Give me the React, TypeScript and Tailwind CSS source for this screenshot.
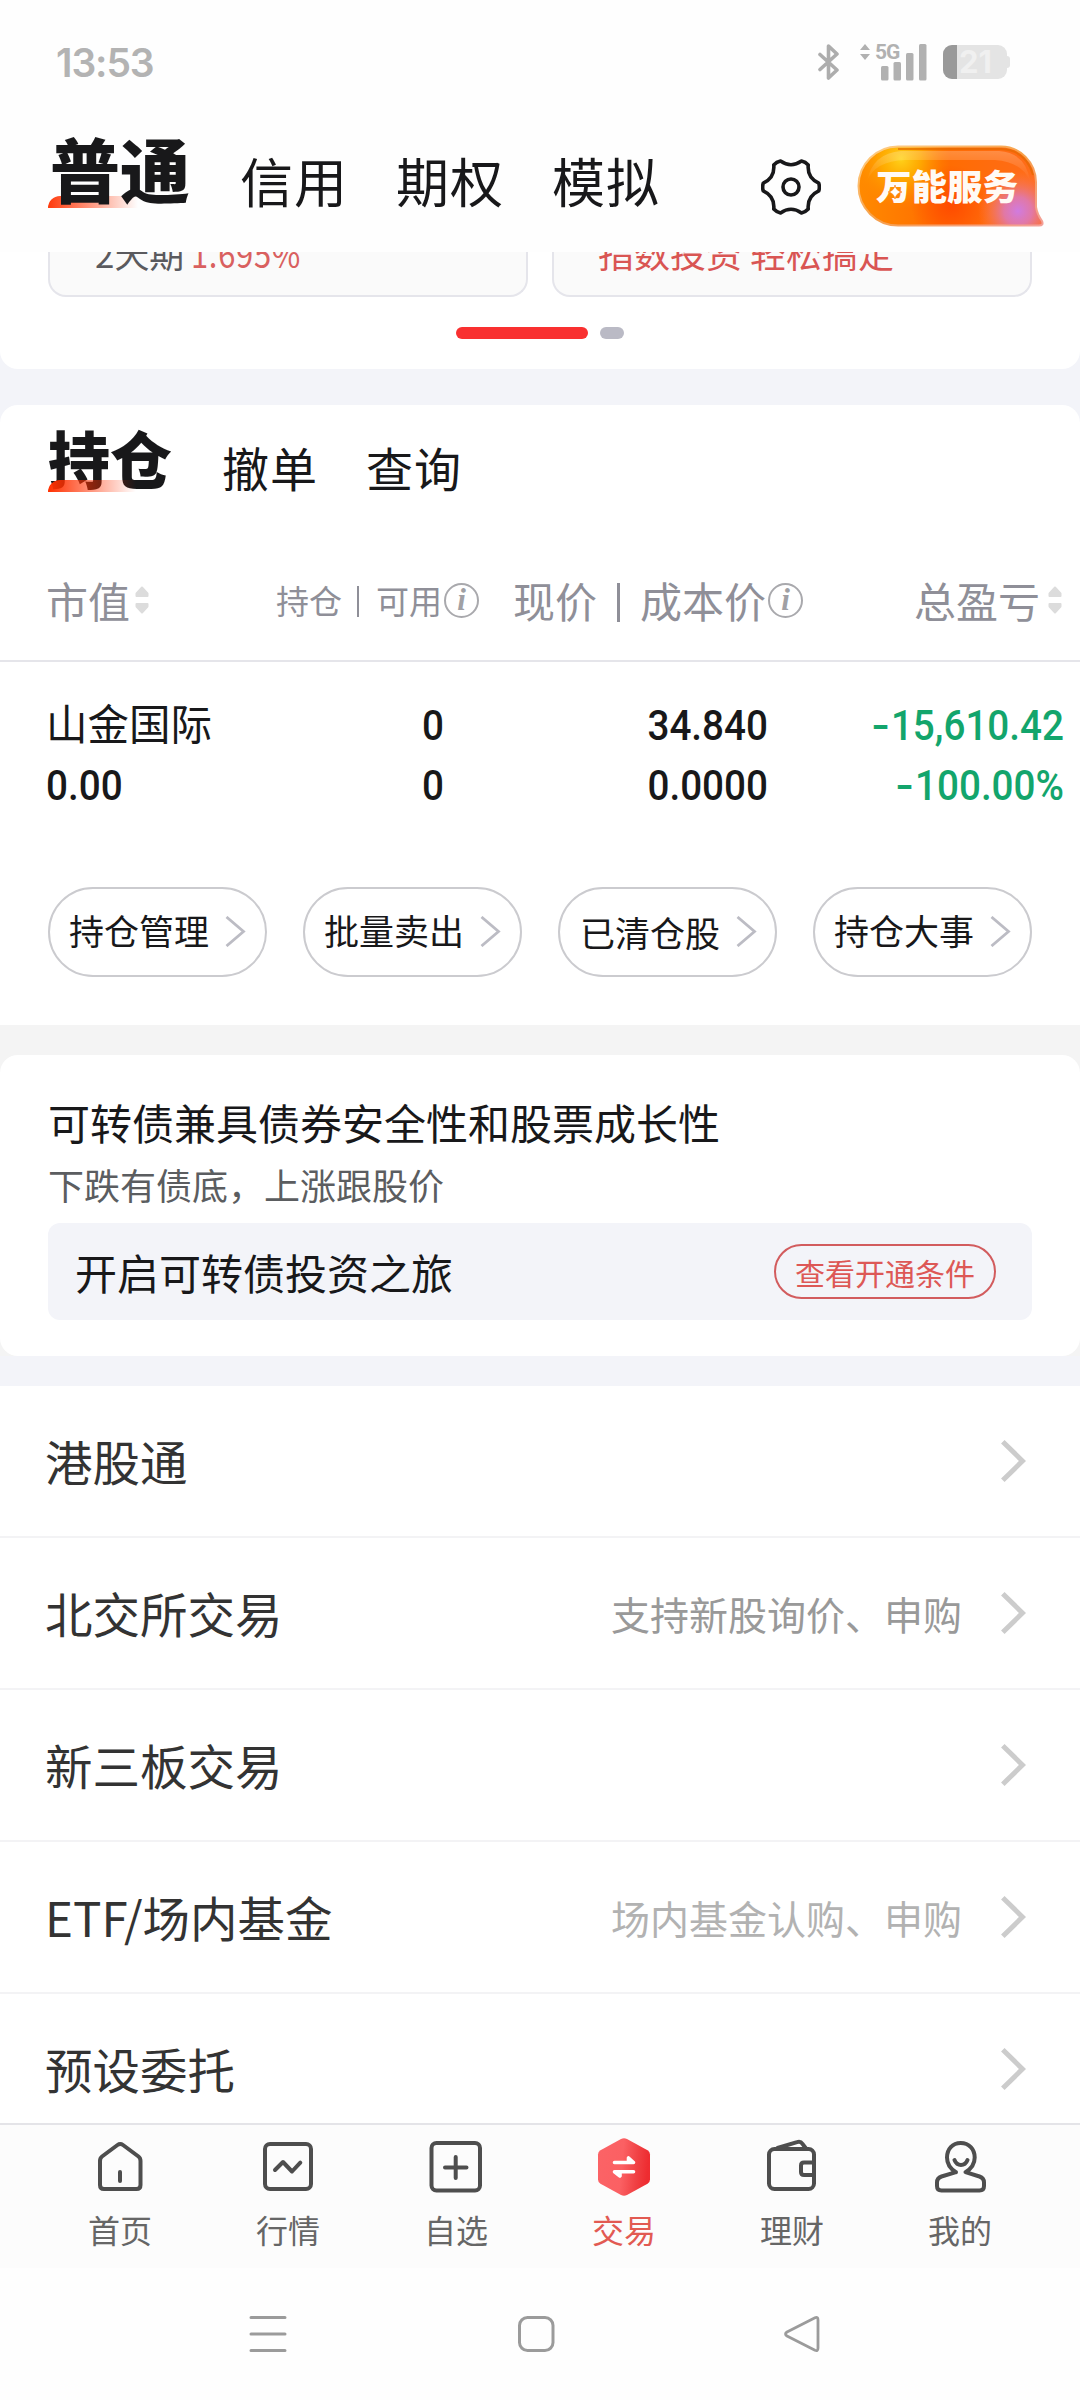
import React from "react";

const CJK = "font-['Noto_Sans_CJK_SC',sans-serif]";

function StatusBar() {
  return (
    <div className="flex h-[124px] items-center pl-[56px] pr-[70px]">
      <span className="font-['Inter',sans-serif] text-[39px] font-semibold leading-none tracking-[-1.1px] text-[#b3b3b3]">
        13:53
      </span>
      <div className="ml-auto flex h-[40px] items-center">
        <svg width="22" height="38" viewBox="0 0 22 38" fill="none" stroke="#adadad" strokeWidth="3.6" strokeLinejoin="round" strokeLinecap="round">
          <path d="M2 11.5 L19 27 L10.5 35 V3 L19 11 L2 26.5" />
        </svg>
        <div className="ml-[20px] flex h-[38px] items-start">
          <svg width="10" height="16" viewBox="0 0 10 16" className="mt-[1px]" fill="#b1b1b1">
            <path d="M5 0 L10 6 H0Z M5 16 L10 10 H0Z" />
          </svg>
          <div className="relative ml-[11px] h-[38px] w-[48px]">
            <svg width="48" height="38" viewBox="0 0 48 38" fill="#b1b1b1">
              <rect x="0" y="23" width="7.5" height="14.5" rx="1.5" />
              <rect x="12.5" y="19" width="7.5" height="18.5" rx="1.5" />
              <rect x="25" y="10" width="7.5" height="27.5" rx="1.5" />
              <rect x="38" y="1" width="7.5" height="36.5" rx="1.5" />
            </svg>
            <span className="absolute left-[-6px] top-[-1px] font-['Roboto',sans-serif] text-[21px] font-bold leading-[20px] tracking-[-1px] text-[#b1b1b1]">
              5G
            </span>
          </div>
        </div>
        <div className="ml-[14px] flex items-center">
          <div className="flex h-[34px] w-[64px] rounded-[9px] bg-[#e4e4e4]">
            <div className="h-full w-[14px] rounded-l-[9px] bg-[#999999]" />
            <span className="pl-[2px] font-['Inter',sans-serif] text-[31px] font-bold leading-[34px] text-[#f0f0f0]">21</span>
          </div>
          <div className="h-[12px] w-[3px] rounded-r-full bg-[#e4e4e4]" />
        </div>
      </div>
    </div>
  );
}

/** Six-lobed gear outline centred on (30, 30). */
function gearPath() {
  const pt = (deg: number, r: number) => {
    const a = (deg * Math.PI) / 180;
    return `${(30 + r * Math.cos(a)).toFixed(2)} ${(30 + r * Math.sin(a)).toFixed(2)}`;
  };
  let d = `M${pt(-8, 28)}`;
  for (let k = 0; k < 6; k++) {
    const c = k * 60;
    d += ` Q${pt(c, 29)} ${pt(c + 8, 28)} C${pt(c + 20, 21.5)} ${pt(c + 40, 21.5)} ${pt(c + 52, 28)}`;
  }
  return d + "Z";
}

function ServiceBadge() {
  const shape =
    "M43 3.5 H146 A35 36 0 0 1 181 39 V64 Q182 71 187 78 Q189 82.5 184 82.5 H43 A39.5 39.5 0 0 1 43 3.5Z";
  return (
    <div className="relative ml-[34px] mt-[19px] h-[86px] w-[190px]">
      <svg width="190" height="86" viewBox="0 0 190 86" className="absolute inset-0">
        <defs>
          <linearGradient id="base" x1="0" y1="0" x2="1" y2="0">
            <stop offset="0" stopColor="#ff8a00" />
            <stop offset="0.45" stopColor="#ff6c00" />
            <stop offset="1" stopColor="#ff6c1c" />
          </linearGradient>
          <radialGradient id="sun" gradientUnits="userSpaceOnUse" cx="46" cy="16" r="50">
            <stop offset="0" stopColor="#ffd21a" />
            <stop offset="0.4" stopColor="#ffb400" stopOpacity="0.8" />
            <stop offset="1" stopColor="#ff8a00" stopOpacity="0" />
          </radialGradient>
          <radialGradient id="violet" gradientUnits="userSpaceOnUse" cx="163" cy="68" r="40">
            <stop offset="0" stopColor="#d07be0" />
            <stop offset="0.35" stopColor="#dc7abf" stopOpacity="0.85" />
            <stop offset="1" stopColor="#ff7a50" stopOpacity="0" />
          </radialGradient>
          <radialGradient id="ember" gradientUnits="userSpaceOnUse" cx="96" cy="62" r="40">
            <stop offset="0" stopColor="#ff4b00" />
            <stop offset="1" stopColor="#ff4b00" stopOpacity="0" />
          </radialGradient>
          <linearGradient id="gloss" x1="0" y1="0" x2="0" y2="1">
            <stop offset="0" stopColor="#ffffff" stopOpacity="0.22" />
            <stop offset="1" stopColor="#ffffff" stopOpacity="0" />
          </linearGradient>
          <linearGradient id="rim" x1="0" y1="0" x2="1" y2="1">
            <stop offset="0" stopColor="#ffd28a" />
            <stop offset="0.5" stopColor="#f6a04a" />
            <stop offset="1" stopColor="#f3a09a" />
          </linearGradient>
        </defs>
        <path d={shape} fill="url(#base)" />
        <path d={shape} fill="url(#ember)" />
        <path d={shape} fill="url(#sun)" />
        <path d={shape} fill="url(#violet)" />
        <path d="M46 8 H144 Q171 10 175 38 Q167 19 140 17 H50 Q20 18 12 38 Q18 10 46 8Z" fill="url(#gloss)" />
        <path d="M43 6 H146 Q171 7 178 32" fill="none" stroke="#e26a00" strokeOpacity="0.7" strokeWidth="2" />
        <path d={shape} fill="none" stroke="url(#rim)" strokeWidth="2" />
      </svg>
      <div className="absolute left-[21px] top-[24px] whitespace-nowrap text-[35.5px] font-black leading-[36px] text-[#fffaf5]">
        万能服务
      </div>
      <svg width="14" height="14" viewBox="0 0 14 14" className="absolute left-[33px] top-[42px]">
        <path d="M7 0 Q8 6 14 7 Q8 8 7 14 Q6 8 0 7 Q6 6 7 0Z" fill="#fff" stroke="#ff8a2a" strokeWidth="0.8" />
      </svg>
    </div>
  );
}

function Header() {
  return (
    <div className="flex h-[128px] items-start pl-[50px] pr-[35px] text-[#18181a]">
      <div className="relative mt-[9px] text-[70px] font-black leading-[70px]">
        <div className="absolute left-[-2px] top-[63px] h-[12px] w-[90px] rounded-tl-[12px] bg-gradient-to-r from-[#ff3a0c] to-[#ff3a0c]/0" />
        <span className="relative">普通</span>
      </div>
      <div className="ml-[50px] mt-[29px] flex gap-[48px] text-[53px] leading-[54px] tracking-[1px]">
        <span>信用</span>
        <span>期权</span>
        <span>模拟</span>
      </div>
      <svg width="60" height="60" viewBox="0 0 60 60" className="ml-auto mt-[33px]" fill="none" stroke="#18181a" strokeWidth="3.6" strokeLinejoin="round">
        <path d={gearPath()} />
        <circle cx="30" cy="30" r="8" />
      </svg>
      <ServiceBadge />
    </div>
  );
}

function Promo() {
  return (
    <div className="h-[117px] overflow-hidden rounded-b-[18px] bg-white px-[48px]">
      <div className="flex gap-[24px]">
        <div className="h-[45px] flex-1 overflow-hidden rounded-b-[18px] border-2 border-t-0 border-[#e5e5eb] bg-[#fafafa]">
          <div className="mt-[-18px] flex whitespace-nowrap pl-[45px] text-[36px] leading-[36px]">
            <span className="origin-left scale-x-[0.97] text-[#5a5a5e]">2天期</span>
            <span className="ml-[4px] origin-left scale-x-[0.86] tracking-[0.8px] text-[#d9605f]">1.695%</span>
          </div>
        </div>
        <div className="h-[45px] flex-1 overflow-hidden rounded-b-[18px] border-2 border-t-0 border-[#e5e5eb] bg-[#fafafa]">
          <div className="mt-[-18px] whitespace-nowrap pl-[44px] text-[36px] leading-[36px] text-[#d95553]">
            指数投资 轻松搞定
          </div>
        </div>
      </div>
      <div className="mt-[30px] flex justify-center gap-[12px]">
        <div className="h-[12px] w-[132px] rounded-full bg-[#f93030]" />
        <div className="h-[12px] w-[24px] rounded-full bg-[#babac5]" />
      </div>
    </div>
  );
}

function SortIcon() {
  return (
    <svg width="14" height="28" viewBox="0 0 14 28" fill="#dcdcdc" stroke="#dcdcdc" strokeWidth="2" strokeLinejoin="round">
      <path d="M7 1.5 L12.5 7.5 V10 H1.5 V7.5Z" />
      <path d="M7 26.5 L12.5 20.5 V18 H1.5 V20.5Z" />
    </svg>
  );
}

function InfoIcon() {
  return (
    <span className="ml-[2px] flex h-[35px] w-[35px] items-center justify-center rounded-full border-2 border-[#a9a9ad] font-['Liberation_Serif',serif] text-[31px] font-bold italic leading-[30px] text-[#a0a0a4]">
      i
    </span>
  );
}

function Num({ children, className = "" }: { children: React.ReactNode; className?: string }) {
  return (
    <span className={`inline-block whitespace-nowrap pt-px font-['Roboto',sans-serif] text-[42px] font-medium leading-[60px] ${className}`}>
      {children}
    </span>
  );
}

function Minus() {
  return <span className="inline-block origin-left scale-x-[1.35] pr-[7px]">-</span>;
}

function Chevron({ size }: { size: "sm" | "lg" }) {
  return size === "sm" ? (
    <svg width="21" height="31" viewBox="0 0 21 31" fill="none" stroke="#bcbcc4" strokeWidth="2.8">
      <path d="M1.5 1 L18.5 15.5 L1.5 30" />
    </svg>
  ) : (
    <svg width="25" height="44" viewBox="0 0 25 44" fill="none" stroke="#cccccc" strokeWidth="5">
      <path d="M1.8 2.8 L21.5 22 L1.8 41.2" />
    </svg>
  );
}

const actions = ["持仓管理", "批量卖出", "已清仓股", "持仓大事"];

function Holdings() {
  return (
    <div className="h-[620px] rounded-t-[18px] bg-white text-[#18181a]">
      <div className="flex h-[135px] items-start pl-[48px]">
        <div className="relative mt-[21px] text-[62px] font-black leading-[62px]">
          持仓
          <div className="absolute left-0 top-[54px] h-[12px] w-[88px] rounded-tl-[12px] bg-gradient-to-r from-[#ff3000] to-[#ff3000]/0" />
        </div>
        <div className="ml-[50px] mt-[38px] flex gap-[48px] text-[47px] leading-[48px] tracking-[1px]">
          <span>撤单</span>
          <span>查询</span>
        </div>
      </div>

      <div className="flex h-[122px] items-center border-b-2 border-[#e5e5ea] pl-[46px] text-[42px] leading-[42px] text-[#8f8f98]">
        <div className="flex w-[204px] items-center gap-[5px]">
          <span>市值</span>
          <SortIcon />
        </div>
        <div className="flex w-[229px] items-center justify-end text-[33px]">
          <span>持仓</span>
          <span className="ml-[15px] mr-[17px] mt-[3px] h-[31px] w-[2px] bg-[#8f8f98]" />
          <span>可用</span>
          <InfoIcon />
        </div>
        <div className="flex w-[324px] items-center justify-end">
          <span>现价</span>
          <span className="ml-[20px] mr-[20px] mt-[5px] h-[39px] w-[3px] bg-[#8f8f98]" />
          <span>成本价</span>
          <InfoIcon />
        </div>
        <div className="flex w-[259px] items-center justify-end gap-[8px]">
          <span>总盈亏</span>
          <SortIcon />
        </div>
      </div>

      <div className="grid h-[153px] grid-cols-[244px_154px_324px_296px] grid-rows-[60px_60px] pl-[46px] pt-[33px]">
        <span className="text-[41.5px] leading-[55px]">山金国际</span>
        <Num className="origin-right scale-x-[0.92] text-right">0</Num>
        <Num className="origin-right scale-x-[0.92] text-right">34.840</Num>
        <Num className="origin-right scale-x-[0.92] text-right text-[#13a56c]">
          <Minus />
          15,610.42
        </Num>
        <Num className="origin-left scale-x-[0.92]">0.00</Num>
        <Num className="origin-right scale-x-[0.92] text-right">0</Num>
        <Num className="origin-right scale-x-[0.92] text-right">0.0000</Num>
        <Num className="origin-right scale-x-[0.92] text-right text-[#13a56c]">
          <Minus />
          100.00%
        </Num>
      </div>

      <div className="mt-[72px] flex justify-between px-[48px]">
        {actions.map((label, i) => (
          <div key={label} className="flex h-[90px] w-[219px] items-center rounded-full border-2 border-[#cbcbcf] pb-[5px] pl-[19px]">
            <span className={`whitespace-nowrap text-[35px] leading-[35px] ${i === 2 ? "pl-[1px] pt-[4px]" : ""}`}>{label}</span>
            <div className="ml-[16px] mt-[3px]">
              <Chevron size="sm" />
            </div>
          </div>
        ))}
      </div>
    </div>
  );
}

function BondCard() {
  return (
    <div className="bg-[#f4f4f4] pt-[30px]">
      <div className="h-[301px] rounded-[18px] bg-white px-[48px] pt-[46px]">
        <div className="text-[42px] leading-[42px] text-[#18181a]">可转债兼具债券安全性和股票成长性</div>
        <div className="mt-[23px] text-[36px] leading-[36px] text-[#5b5d60]">下跌有债底，上涨跟股价</div>
        <div className="mt-[21px] flex h-[97px] items-center justify-between rounded-[12px] bg-[#f3f4f9] pl-[27px] pr-[36px]">
          <span className="text-[42px] leading-[42px] text-[#18181a]">开启可转债投资之旅</span>
          <span className="flex h-[55px] w-[222px] items-center justify-center rounded-full border-2 border-[#d25c5e] text-[30px] leading-[30px] text-[#dd5856]">
            查看开通条件
          </span>
        </div>
      </div>
    </div>
  );
}

const menu = [
  { label: "港股通" },
  { label: "北交所交易", hint: "支持新股询价、申购", tone: "text-[#999999]" },
  { label: "新三板交易" },
  { label: "ETF/场内基金", hint: "场内基金认购、申购", tone: "text-[#b2b2b2]" },
  { label: "预设委托" },
];

function MenuList() {
  return (
    <div className="mt-[30px] h-[737px] overflow-hidden bg-white">
      {menu.map((m) => (
        <div key={m.label} className="flex h-[152px] items-center border-b-2 border-[#f3f3f5] pl-[45px] pr-[54px]">
          <span className="text-[47.5px] leading-[48px] text-[#333333]">{m.label}</span>
          {m.hint && <span className={`ml-auto mr-[39px] text-[39px] leading-[39px] ${m.tone}`}>{m.hint}</span>}
          <div className={m.hint ? "" : "ml-auto"}>
            <Chevron size="lg" />
          </div>
        </div>
      ))}
    </div>
  );
}

const tabs = [
  {
    label: "首页",
    icon: (
      <>
        <path d="M29.5 10 L14 21.5 Q12 23 12 26 V50 Q12 54 16 54 H48.5 Q52.5 54 52.5 50 V26 Q52.5 23 50.5 21.5 L35 10 Q32.2 8 29.5 10Z" />
        <path d="M32 37 V46" />
      </>
    ),
  },
  {
    label: "行情",
    icon: (
      <>
        <rect x="9" y="9" width="46" height="45" rx="5" />
        <path d="M19 35 L27 27 L36 36.5 L44.3 27.7" />
      </>
    ),
  },
  {
    label: "自选",
    icon: (
      <>
        <rect x="7.5" y="8" width="48.5" height="47.5" rx="5" />
        <path d="M31.7 22 V43 M21 32.5 H42.5" />
      </>
    ),
  },
  {
    label: "交易",
    active: true,
    icon: (
      <>
        <defs>
          <linearGradient id="hex" x1="0" y1="0" x2="1" y2="0.1">
            <stop offset="0" stopColor="#fb6366" />
            <stop offset="0.5" stopColor="#fb6063" />
            <stop offset="0.8" stopColor="#f04043" />
            <stop offset="1" stopColor="#ee2c30" />
          </linearGradient>
        </defs>
        <path
          d="M29 4 Q32 2.4 35 4 L55.5 15.3 Q58 16.8 58 19.5 V44.5 Q58 47.2 55.5 48.7 L35 60 Q32 61.6 29 60 L8.5 48.7 Q6 47.2 6 44.5 V19.5 Q6 16.8 8.5 15.3Z"
          fill="url(#hex)"
          stroke="none"
        />
        <path d="M22.5 27.5 H41.5 L36.5 23 V27 M41.5 36.8 H22.5 L28 41 V37" stroke="#fff" strokeWidth="3.6" />
      </>
    ),
  },
  {
    label: "理财",
    icon: (
      <>
        <rect x="9" y="14" width="45" height="40" rx="5.5" />
        <path d="M17.5 13 L37 7.2 Q40.5 6 42.5 8.8 L46 13.5" />
        <path d="M54 27.5 H44 Q41 27.5 41 30.5 V37 Q41 40 44 40 H54" />
      </>
    ),
  },
  {
    label: "我的",
    icon: (
      <>
        <path d="M28 37.2 L13.5 41.5 Q9 43 9 47.5 V51 Q9 55.5 13.5 55.5 H51.5 Q56 55.5 56 51 V47.5 Q56 43 51.5 41.5 L37.5 37.2 C44.5 33 46.7 28 46.7 22.5 C46.7 14 41 8 32.7 8 C24.5 8 19 14 19 22.5 C19 28 21 33 28 37.2" />
        <path d="M26.5 25 Q28.5 30 33 30 Q37.5 30 39.5 25" />
      </>
    ),
  },
];

function TabBar() {
  return (
    <div className="flex h-[145px] border-t-2 border-[#e4e4e8] bg-[#fcfcfc] px-[36px]">
      {tabs.map((t) => (
        <div key={t.label} className={`flex flex-1 flex-col items-center pt-[10px] ${t.active ? "text-[#e25a52]" : "text-[#666666]"}`}>
          <svg width="64" height="64" viewBox="0 0 64 64" fill="none" stroke="#4e4e4e" strokeWidth="4" strokeLinecap="round" strokeLinejoin="round">
            {t.icon}
          </svg>
          <span className="mt-[14px] text-[32px] leading-[32px]">{t.label}</span>
        </div>
      ))}
    </div>
  );
}

function SystemNav() {
  return (
    <div className="ml-[134px] grid h-[132px] w-[804px] grid-cols-3 items-center justify-items-center">
      <svg width="40" height="40" viewBox="0 0 40 40" stroke="#9b9b9b" strokeWidth="3" strokeLinecap="round">
        <path d="M3 3.5 H37 M3 20 H37 M3 36.5 H37" />
      </svg>
      <svg width="40" height="40" viewBox="0 0 40 40" fill="none" stroke="#9b9b9b" strokeWidth="3">
        <rect x="3.5" y="3.5" width="33.5" height="33" rx="8" />
      </svg>
      <svg width="40" height="40" viewBox="0 0 40 40" fill="none" stroke="#9b9b9b" strokeWidth="2.8" strokeLinejoin="round">
        <path d="M31 3.8 Q34 2.5 34 6 V34 Q34 37.5 31 36.2 L3 22 Q0 20 3 18Z" />
      </svg>
    </div>
  );
}

export default function App() {
  return (
    <div className={`h-[2400px] w-[1080px] overflow-hidden bg-[#fefefe] ${CJK}`}>
      <StatusBar />
      <Header />
      <div className="bg-[#f3f4f9]">
        <Promo />
        <div className="h-[36px]" />
        <Holdings />
        <BondCard />
        <MenuList />
      </div>
      <TabBar />
      <SystemNav />
    </div>
  );
}
